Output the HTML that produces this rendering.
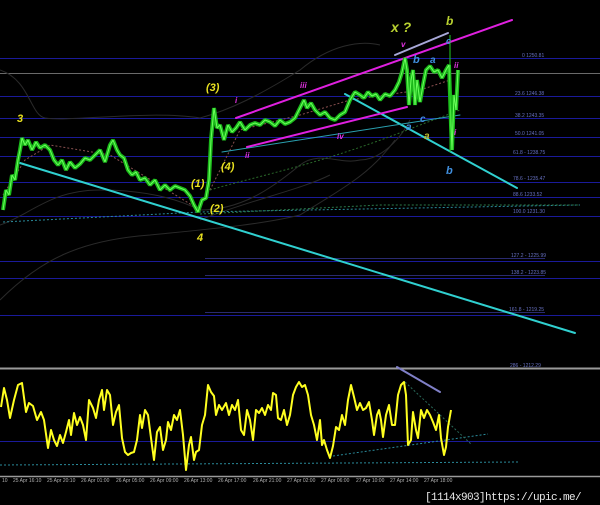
<!DOCTYPE html>
<html><head><meta charset="utf-8"><style>
html,body{margin:0;padding:0;background:#000;width:600px;height:505px;overflow:hidden}
svg{display:block}
text{font-family:"Liberation Sans",sans-serif}
</style></head><body>
<svg width="600" height="505" viewBox="0 0 600 505" xmlns="http://www.w3.org/2000/svg">
<rect width="600" height="505" fill="#000"/>
<g stroke="#1a1a9a" stroke-width="1">
<line x1="0" y1="58.5" x2="600" y2="58.5"/>
<line x1="0" y1="96.5" x2="600" y2="96.5"/>
<line x1="0" y1="118.5" x2="600" y2="118.5"/>
<line x1="0" y1="137.5" x2="600" y2="137.5"/>
<line x1="0" y1="156.5" x2="600" y2="156.5"/>
<line x1="0" y1="182.5" x2="600" y2="182.5"/>
<line x1="0" y1="197.5" x2="600" y2="197.5"/>
<line x1="0" y1="216.5" x2="600" y2="216.5"/>
<line x1="0" y1="261.5" x2="600" y2="261.5"/>
<line x1="0" y1="278.5" x2="600" y2="278.5"/>
<line x1="0" y1="315.5" x2="600" y2="315.5"/>
<line x1="0" y1="441.5" x2="600" y2="441.5"/>
</g>
<g stroke="#2a2a70" stroke-width="1">
<line x1="205" y1="258.5" x2="545" y2="258.5"/>
<line x1="205" y1="275.5" x2="545" y2="275.5"/>
<line x1="205" y1="312.5" x2="545" y2="312.5"/>
</g>
<line x1="0" y1="73.5" x2="600" y2="73.5" stroke="#6a6a6a"/>
<line x1="0" y1="368.5" x2="600" y2="368.5" stroke="#9a9a9a" stroke-width="2"/>
<line x1="0" y1="476.5" x2="600" y2="476.5" stroke="#9a9a9a" stroke-width="1.5"/>
<g fill="#6670c0" font-size="5">
<text x="522" y="57">0 1250.81</text>
<text x="515" y="95">23.6 1246.38</text>
<text x="515" y="117">38.2 1243.35</text>
<text x="515" y="135">50.0 1241.05</text>
<text x="513" y="154">61.8 - 1238.75</text>
<text x="513" y="180">78.6 - 1235.47</text>
<text x="513" y="196">88.6 1233.52</text>
<text x="513" y="213">100.0 1231.30</text>
<text x="511" y="257">127.2 - 1225.99</text>
<text x="511" y="274">138.2 - 1223.85</text>
<text x="509" y="311">161.8 - 1219.25</text>
<text x="510" y="367">286 - 1212.29</text>
</g>
<g fill="none" stroke="#2a2a2a" stroke-width="1">
<path d="M0,70 C30,80 30,115 45,118 C70,122 150,110 200,118 C230,110 260,95 300,70 C330,45 360,40 380,45"/>
<path d="M0,225 C30,215 50,190 100,190 C150,190 180,200 200,210 C240,210 270,190 300,165 C320,150 340,165 360,160 C380,160 400,140 410,120"/>
<path d="M0,300 C40,260 80,240 150,235 C200,230 260,225 300,215 C340,190 370,175 395,140"/>
<path d="M200,220 C250,200 300,190 330,175"/>
</g>
<g fill="none" stroke-width="1" stroke-dasharray="2,2">
<path d="M3,222 L200,212 L580,205" stroke="#2a8a9a"/>
<path d="M200,214 L380,205 L580,205" stroke="#2a7a4a"/>
<path d="M3,195 L25,160 L50,145 L110,155 L200,210 M210,190 L240,130 L300,115 L350,100 L420,90 L450,80" stroke="#8a5050"/>
<path d="M210,190 C260,175 320,165 420,125 L460,110" stroke="#2a6a2a"/>
</g>
<g fill="none" stroke-linecap="round">
<line x1="20" y1="163" x2="575" y2="333" stroke="#30d0d0" stroke-width="2"/>
<line x1="345" y1="94" x2="517" y2="188" stroke="#30d0d0" stroke-width="2"/>
<line x1="222" y1="152" x2="460" y2="115" stroke="#2aa0b0" stroke-width="1"/>
<line x1="236" y1="118" x2="512" y2="20" stroke="#e020e0" stroke-width="2"/>
<line x1="247" y1="147" x2="407" y2="107" stroke="#e020e0" stroke-width="2"/>
<line x1="395" y1="55" x2="448" y2="33" stroke="#a8a8d8" stroke-width="2"/>
<line x1="397" y1="367" x2="440" y2="392" stroke="#8080c8" stroke-width="2"/>
</g>
<g fill="none" stroke-linejoin="bevel">
<polyline stroke="#1ab81a" stroke-width="4" points="3,210 6,190 9,195 12,175 15,180 18,160 20,150 22,138 25,145 28,140 32,150 36,142 40,148 45,145 50,150 54,160 58,165 62,160 66,170 70,162 75,168 80,164 85,158 90,160 95,155 100,150 105,162 110,145 113,140 117,150 120,155 124,158 128,170 132,175 136,172 140,180 145,178 150,185 155,180 160,190 165,185 170,190 175,186 180,188 185,190 190,196 194,205 198,212 202,200 206,198 209,180 211,140 214,108 217,128 220,125 224,140 228,125 232,132 236,128 240,122 245,130 250,125 255,123 260,125 265,120 270,122 275,126 280,120 285,124 290,122 295,118 300,108 304,100 307,108 311,103 315,110 320,115 325,112 330,118 335,120 340,115 345,112 350,100 355,92 360,95 364,98 368,92 372,96 376,94 380,100 385,94 390,96 395,90 399,82 402,72 405,58 407,70 409,105 411,80 413,70 415,105 417,80 420,102 423,85 426,70 430,66 434,72 438,70 442,78 446,70 449,65 451,125 452,150 454,95 456,110 458,70"/>
<polyline stroke="#6cff5c" stroke-width="1" points="3,210 6,190 9,195 12,175 15,180 18,160 20,150 22,138 25,145 28,140 32,150 36,142 40,148 45,145 50,150 54,160 58,165 62,160 66,170 70,162 75,168 80,164 85,158 90,160 95,155 100,150 105,162 110,145 113,140 117,150 120,155 124,158 128,170 132,175 136,172 140,180 145,178 150,185 155,180 160,190 165,185 170,190 175,186 180,188 185,190 190,196 194,205 198,212 202,200 206,198 209,180 211,140 214,108 217,128 220,125 224,140 228,125 232,132 236,128 240,122 245,130 250,125 255,123 260,125 265,120 270,122 275,126 280,120 285,124 290,122 295,118 300,108 304,100 307,108 311,103 315,110 320,115 325,112 330,118 335,120 340,115 345,112 350,100 355,92 360,95 364,98 368,92 372,96 376,94 380,100 385,94 390,96 395,90 399,82 402,72 405,58 407,70 409,105 411,80 413,70 415,105 417,80 420,102 423,85 426,70 430,66 434,72 438,70 442,78 446,70 449,65 451,125 452,150 454,95 456,110 458,70"/>
</g>
<line x1="450" y1="35" x2="450" y2="152" stroke="#22cc22" stroke-width="1"/>
<g font-style="italic" font-weight="bold">
<text x="17" y="122" fill="#e8e020" font-size="11">3</text>
<text x="197" y="241" fill="#e8e020" font-size="11">4</text>
<text x="206" y="91" fill="#e8e020" font-size="11">(3)</text>
<text x="191" y="187" fill="#e8e020" font-size="11">(1)</text>
<text x="210" y="212" fill="#e8e020" font-size="11">(2)</text>
<text x="221" y="170" fill="#e8e020" font-size="11">(4)</text>
<text x="391" y="32" fill="#b8d030" font-size="14">x ?</text>
<text x="446" y="25" fill="#b8d030" font-size="12">b</text>
<text x="446" y="174" fill="#4090e0" font-size="11">b</text>
<text x="413" y="63" fill="#4090e0" font-size="11">b</text>
<text x="430" y="63" fill="#4090e0" font-size="10">a</text>
<text x="420" y="122" fill="#4090e0" font-size="10">c</text>
<text x="406" y="130" fill="#4090e0" font-size="10">a</text>
<text x="424" y="139" fill="#c0c030" font-size="10">a</text>
<text x="446" y="44" fill="#4090e0" font-size="9">c</text>
<g fill="#e030e0" font-size="8">
<text x="235" y="103">i</text>
<text x="245" y="158">ii</text>
<text x="300" y="88">iii</text>
<text x="337" y="139">iv</text>
<text x="401" y="47">v</text>
<text x="454" y="68">ii</text>
<text x="454" y="135">i</text>
</g>
</g>
<g fill="none" stroke-width="1" stroke-dasharray="2,2">
<path d="M0,465 L520,462" stroke="#2a8a9a"/>
<path d="M333,456 L488,434" stroke="#2a8a9a"/>
<path d="M405,382 L472,445" stroke="#2a6a5a"/>
</g>
<polyline fill="none" stroke="#ffff20" stroke-width="2" stroke-linejoin="round" points="1,407 4,388 7,400 10,418 14,400 18,385 22,383 26,412 29,403 33,406 37,420 41,412 44,420 48,448 51,430 54,440 57,446 60,435 63,443 66,432 69,420 71,435 74,413 77,425 80,417 83,425 86,440 89,400 93,408 96,418 99,400 102,390 104,410 107,390 110,395 113,425 116,412 119,405 122,438 125,452 128,455 131,453 134,452 137,440 140,415 142,428 145,410 148,415 151,438 154,460 157,432 160,427 163,450 166,440 168,422 171,430 174,415 177,420 180,410 183,435 186,470 189,445 191,437 194,460 196,452 199,450 202,425 205,415 208,385 211,392 214,396 216,415 219,405 222,410 226,403 229,415 232,405 235,410 238,400 241,430 244,435 247,410 250,420 253,440 256,410 259,413 262,408 265,415 268,405 271,410 273,393 276,395 278,418 281,420 284,410 287,425 290,415 293,395 296,387 299,382 302,387 305,385 308,395 311,415 314,425 317,440 320,420 322,445 324,440 327,450 330,458 333,446 336,427 339,430 342,415 345,425 348,400 351,385 354,397 357,410 360,403 363,410 366,408 369,402 372,420 374,435 377,415 379,410 381,420 383,437 386,415 389,405 392,425 395,425 398,395 401,385 404,382 406,395 408,445 411,440 413,412 416,430 418,438 421,410 424,418 427,410 430,415 433,422 436,430 439,415 441,438 444,455 446,447 448,427 451,410"/>
<g fill="#b0b0b0" font-size="5">
<text x="2" y="482">10</text>
<text x="13" y="482">25 Apr 16:10</text>
<text x="47" y="482">25 Apr 20:10</text>
<text x="81" y="482">26 Apr 01:00</text>
<text x="116" y="482">26 Apr 05:00</text>
<text x="150" y="482">26 Apr 09:00</text>
<text x="184" y="482">26 Apr 13:00</text>
<text x="218" y="482">26 Apr 17:00</text>
<text x="253" y="482">26 Apr 21:00</text>
<text x="287" y="482">27 Apr 02:00</text>
<text x="321" y="482">27 Apr 06:00</text>
<text x="356" y="482">27 Apr 10:00</text>
<text x="390" y="482">27 Apr 14:00</text>
<text x="424" y="482">27 Apr 18:00</text>
</g>
<text x="425" y="500" fill="#e8e8e8" font-size="11" style="font-family:'Liberation Mono',monospace;letter-spacing:-0.6px">[1114x903]https://upic.me/</text>
</svg>
</body></html>
